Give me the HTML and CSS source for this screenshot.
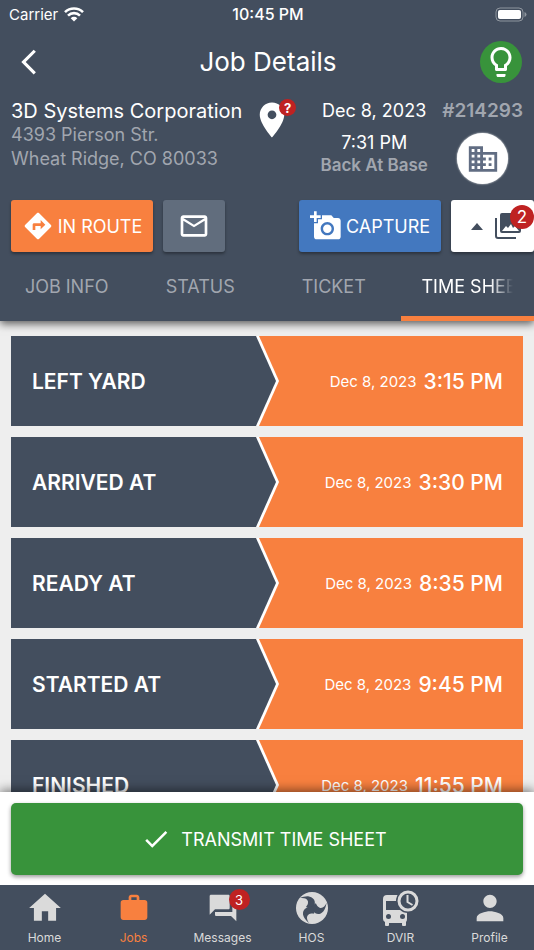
FILE: index.html
```
<!DOCTYPE html>
<html lang="en">
<head>
    <meta charset="UTF-8">
    <meta name="viewport" content="width=device-width, initial-scale=1">
    <title>Job Details</title>
    <link rel="stylesheet" href="styles.css">
</head>
<body>

<header class="header">
    <div class="statusbar">
        <div class="carrier">
            Carrier
            <svg class="wifi" viewBox="0 0 20 15">
                <path d="M1 5.2a12.8 12.8 0 0 1 18 0M4 8.6a8.5 8.5 0 0 1 12 0" fill="none" stroke="currentColor" stroke-width="2.6"/>
                <path d="M10 14.5l-3.3-3.3a4.7 4.7 0 0 1 6.6 0z" fill="currentColor"/>
            </svg>
        </div>
        <div class="clock">10:45 PM</div>
        <svg class="battery" viewBox="0 0 32 15">
            <rect x="1" y="1" width="27" height="13" rx="4" fill="none" stroke="#8e959e"/>
            <rect x="3" y="3" width="23" height="9" rx="2" fill="#fff"/>
            <path d="M29.5 5v5q2-.8 2-2.500t-2-2.500z" fill="#8e959e"/>
        </svg>
    </div>

    <div class="titlebar">
        <button class="backbtn" type="button" aria-label="Back">
            <svg class="icon30" viewBox="0 0 24 24"><path d="M17.51 3.87L15.73 2.1 5.84 12l9.9 9.9 1.77-1.77L9.38 12z"/></svg>
        </button>
        <h1>Job Details</h1>
        <button class="hintbtn" type="button" aria-label="Hints">
            <svg class="icon36" viewBox="0 0 24 24"><path d="M9 21c0 .55.45 1 1 1h4c.55 0 1-.45 1-1v-1H9v1zm3-19C8.140 2 5 5.140 5 9c0 2.380 1.190 4.470 3 5.740V17c0 .55.45 1 1 1h6c.55 0 1-.45 1-1v-2.260c1.810-1.270 3-3.360 3-5.740 0-3.860-3.140-7-7-7zm2.850 11.100l-.85.6V16h-4v-2.300l-.85-.6C7.800 12.160 7 10.630 7 9c0-2.760 2.240-5 5-5s5 2.240 5 5c0 1.630-.8 3.160-2.150 4.100z"/></svg>
        </button>
    </div>

    <div class="jobinfo">
        <div class="customer">
            <h2>3D Systems Corporation</h2>
            <p>4393 Pierson Str.</p>
            <p>Wheat Ridge, CO 80033</p>
        </div>
        <div class="pin">
            <svg class="icon42" viewBox="0 0 24 24"><path d="M12 2C8.130 2 5 5.130 5 9c0 5.250 7 13 7 13s7-7.750 7-13c0-3.870-3.130-7-7-7zm0 9.500c-1.380 0-2.500-1.120-2.500-2.500s1.120-2.500 2.500-2.500 2.500 1.120 2.500 2.500-1.120 2.500-2.500 2.500z"/></svg>
            <span class="badge pinbadge">?</span>
        </div>
        <div class="schedule">
            <div class="date">Dec 8, 2023</div>
            <div class="time">7:31 PM</div>
            <div class="base">Back At Base</div>
        </div>
        <div class="jobref">
            <div class="jobno">#214293</div>
            <button class="companybtn" type="button" aria-label="Company">
                <svg class="icon34" viewBox="0 0 24 24"><path d="M12 7V3H2v18h20V7H12zM6 19H4v-2h2v2zm0-4H4v-2h2v2zm0-4H4V9h2v2zm0-4H4V5h2v2zm4 12H8v-2h2v2zm0-4H8v-2h2v2zm0-4H8V9h2v2zm0-4H8V5h2v2zm10 12h-8v-2h2v-2h-2v-2h2v-2h-2V9h8v10zm-2-8h-2v2h2v-2zm0 4h-2v2h2v-2z"/></svg>
            </button>
        </div>
    </div>

    <div class="actions">
        <button class="btn route" type="button">
            <svg class="icon32" viewBox="0 0 24 24"><path d="M21.710 11.290l-9-9c-.39-.39-1.020-.39-1.410 0l-9 9c-.39.39-.39 1.020 0 1.410l9 9c.39.39 1.020.39 1.410 0l9-9c.39-.38.39-1.010 0-1.410zM14 14.500V12h-4v3H8v-4c0-.55.45-1 1-1h5V7.500l3.500 3.500-3.500 3.500z"/></svg>
            IN ROUTE
        </button>
        <button class="btn mail" type="button" aria-label="Mail">
            <svg class="icon32" viewBox="0 0 24 24"><path d="M20 4H4c-1.100 0-2 .9-2 2v12c0 1.100.9 2 2 2h16c1.100 0 2-.9 2-2V6c0-1.100-.9-2-2-2zm0 14H4V8l8 5 8-5v10zm-8-7L4 6h16l-8 5z"/></svg>
        </button>
        <button class="btn capture" type="button">
            <svg class="icon32" viewBox="0 0 24 24"><path d="M3 4V1h2v3h3v2H5v3H3V6H0V4h3zm3 6V7h3V4h7l1.830 2H21c1.100 0 2 .9 2 2v12c0 1.100-.9 2-2 2H5c-1.100 0-2-.9-2-2V10h3zm7 9c2.760 0 5-2.240 5-5s-2.240-5-5-5-5 2.240-5 5 2.240 5 5 5zm-3.200-5c0 1.770 1.430 3.200 3.200 3.200s3.200-1.430 3.200-3.200-1.430-3.200-3.200-3.200-3.200 1.430-3.200 3.200z"/></svg>
            CAPTURE
        </button>
        <button class="btn gallery" type="button" aria-label="Photos">
            <svg class="caret" viewBox="0 0 12 7"><path d="M0 7l6-7 6 7z"/></svg>
            <svg class="icon28" viewBox="0 0 28 28">
                <path fill-rule="evenodd" d="M8 1h17q2 0 2 2v16q0 2-2 2H8q-2 0-2-2V3q0-2 2-2zm0 18h17l-4-5-2 2-2-4-3 4-2-2z"/>
                <path d="M2 6v18q0 2 2 2h18" fill="none" stroke="currentColor" stroke-width="2"/>
            </svg>
            <span class="badge gallerybadge">2</span>
        </button>
    </div>

    <div class="tabs" role="tablist">
        <button class="tab" type="button" role="tab"><span>JOB INFO</span></button>
        <button class="tab" type="button" role="tab"><span>STATUS</span></button>
        <button class="tab" type="button" role="tab"><span>TICKET</span></button>
        <button class="tab active" type="button" role="tab" aria-selected="true"><span>TIME SHEET</span></button>
    </div>
</header>

<main class="sheet">
    <ul class="stages">
        <li class="stage">
            <div class="arrow"><div class="stagename">LEFT YARD</div></div>
            <div class="stamp"><span>Dec 8, 2023</span> <b>3:15 PM</b></div>
        </li>
        <li class="stage">
            <div class="arrow"><div class="stagename">ARRIVED AT</div></div>
            <div class="stamp"><span>Dec 8, 2023</span> <b>3:30 PM</b></div>
        </li>
        <li class="stage">
            <div class="arrow"><div class="stagename">READY AT</div></div>
            <div class="stamp"><span>Dec 8, 2023</span> <b>8:35 PM</b></div>
        </li>
        <li class="stage">
            <div class="arrow"><div class="stagename">STARTED AT</div></div>
            <div class="stamp"><span>Dec 8, 2023</span> <b>9:45 PM</b></div>
        </li>
        <li class="stage">
            <div class="arrow"><div class="stagename">FINISHED</div></div>
            <div class="stamp"><span>Dec 8, 2023</span> <b>11:55 PM</b></div>
        </li>
    </ul>
</main>

<div class="submitbar">
    <button class="transmit" type="button">
        <svg class="icon30" viewBox="0 0 24 24"><path d="M9 16.170L4.830 12l-1.420 1.410L9 19 21 7l-1.410-1.410z"/></svg>
        TRANSMIT TIME SHEET
    </button>
</div>

<nav class="nav">
    <a href="#home">
        <span class="navicon"><svg class="icon38" viewBox="0 0 24 24"><path d="M10 20v-6h4v6h5v-8h3L12 3 2 12h3v8z"/></svg></span>
        Home
    </a>
    <a href="#jobs" class="current">
        <span class="navicon"><svg class="icon32" viewBox="0 0 24 24"><path d="M20 6h-4V4c0-1.110-.89-2-2-2h-4c-1.110 0-2 .89-2 2v2H4c-1.110 0-2 .89-2 2v11c0 1.110.89 2 2 2h16c1.110 0 2-.89 2-2V8c0-1.110-.89-2-2-2zm-6 0h-4V4h4v2z"/></svg></span>
        Jobs
    </a>
    <a href="#messages">
        <span class="navicon">
            <svg class="icon32" viewBox="0 0 24 24"><path d="M21 6h-2v9H6v2c0 .55.45 1 1 1h11l4 4V7c0-.55-.45-1-1-1zm-4 6V3c0-.55-.45-1-1-1H3c-.55 0-1 .45-1 1v14l4-4h10c.55 0 1-.45 1-1z"/></svg>
            <span class="badge navbadge">3</span>
        </span>
        Messages
    </a>
    <a href="#hos">
        <span class="navicon">
            <svg class="icon32" viewBox="-16 -16 32 32">
                <circle r="16"/>
                <g fill="#434e5e">
                    <path id="blade" d="M1 1C4-4 4-10-3-11.500C-6-12-9-11-12-10C-8-10.500-4.500-9.500-4-6.500C-3.700-4-5-2.500-6-1C-4 0-2 1 1 1z"/>
                    <use href="#blade" transform="rotate(120)"/>
                    <use href="#blade" transform="rotate(240)"/>
                </g>
            </svg>
        </span>
        HOS
    </a>
    <a href="#dvir">
        <span class="navicon">
            <svg class="icon36" viewBox="0 0 36 36">
                <path d="M4 5h17q3 0 3 3v21q0 2-1 3v3q0 1-1 1h-2q-1 0-1-1v-2H6v2q0 1-1 1H3q-1 0-1-1v-3q-2-1-2-3V9q0-4 4-4z"/>
                <g fill="#434e5e">
                    <path d="M3 11h18v9H3z"/>
                    <circle cx="5.500" cy="26.500" r="2.500"/>
                    <circle cx="19.500" cy="26.500" r="2.500"/>
                    <circle cx="25" cy="11" r="12"/>
                </g>
                <circle cx="25" cy="11" r="9" fill="none" stroke="currentColor" stroke-width="3"/>
                <path d="M24.500 5v7l5 3" fill="none" stroke="currentColor" stroke-width="2"/>
            </svg>
        </span>
        DVIR
    </a>
    <a href="#profile">
        <span class="navicon"><svg class="icon40" viewBox="0 0 24 24"><path d="M12 12c2.210 0 4-1.790 4-4s-1.790-4-4-4-4 1.790-4 4 1.790 4 4 4zm0 2c-2.670 0-8 1.340-8 4v2h16v-2c0-2.660-5.330-4-8-4z"/></svg></span>
        Profile
    </a>
</nav>

</body>
</html>
```
FILE: styles.css
```
*{
    box-sizing: border-box;
}

body{
    margin: 0;
    height: 100vh;
    display: flex;
    flex-direction: column;
    overflow: hidden;
    background: #eeeeee;
    color: #ffffff;
    font-family: Inter, "Liberation Sans", sans-serif;
}

h1, h2, p, ul{
    margin: 0;
    padding: 0;
    font-weight: 400;
}

button{
    margin: 0;
    padding: 0;
    border: 0;
    background: none;
    color: inherit;
    font: inherit;
    cursor: pointer;
}

svg{
    display: block;
    flex: none;
    fill: currentColor;
}

.icon28{ width: 28px; height: 28px; }
.icon30{ width: 30px; height: 30px; }
.icon32{ width: 32px; height: 32px; }
.icon34{ width: 34px; height: 34px; }
.icon36{ width: 36px; height: 36px; }
.icon38{ width: 38px; height: 38px; }
.icon40{ width: 40px; height: 40px; }
.icon42{ width: 42px; height: 42px; }

.badge{
    position: absolute;
    display: flex;
    align-items: center;
    justify-content: center;
    border-radius: 50%;
    background: #bf2222;
    color: #ffffff;
}

/* header */
.header{
    position: relative;
    z-index: 1;
    flex: none;
    background: #434e5e;
    box-shadow: 0 3px 8px rgba(0,0,0,0.6);
}

.statusbar{
    display: grid;
    grid-template-columns: 1fr auto 1fr;
    align-items: center;
    height: 28px;
    padding: 0 7px 0 9px;
    font-size: 15px;
}

.carrier{
    display: flex;
    align-items: center;
    gap: 6px;
}

.wifi{
    width: 20px;
    height: 15px;
}

.clock{
    font-size: 16px;
    font-weight: 500;
}

.battery{
    justify-self: end;
    width: 32px;
    height: 15px;
}

.titlebar{
    display: grid;
    grid-template-columns: 42px 1fr 42px;
    align-items: center;
    height: 68px;
    padding: 0 12px 0 14px;
}

h1{
    text-align: center;
    font-size: 26px;
    line-height: 30px;
}

.hintbtn{
    display: flex;
    align-items: center;
    justify-content: center;
    width: 42px;
    height: 42px;
    border-radius: 50%;
    background: #38933b;
}

.jobinfo{
    display: grid;
    grid-template-columns: 1fr 55px 128px auto;
    column-gap: 4px;
    height: 104px;
    padding: 3px 11px 0;
    line-height: 24px;
}

.customer{
    min-width: 0;
    color: #a1a6af;
    font-size: 18px;
    white-space: nowrap;
}

h2{
    color: #ffffff;
    font-size: 20px;
}

.pin{
    position: relative;
}

.pinbadge{
    top: 0;
    left: 28px;
    width: 17px;
    height: 17px;
    font-size: 13px;
    font-weight: 700;
}

.schedule{
    display: flex;
    flex-direction: column;
    align-items: center;
    font-size: 18px;
}

.time{
    margin-top: 9px;
    line-height: 22px;
}

.base{
    color: #a1a6af;
    font-size: 17px;
    font-weight: 600;
    line-height: 22px;
}

.jobref{
    display: flex;
    flex-direction: column;
    align-items: center;
    gap: 10px;
}

.jobno{
    color: #a1a6af;
    font-size: 19px;
    font-weight: 600;
}

.companybtn{
    display: flex;
    align-items: center;
    justify-content: center;
    width: 51px;
    height: 51px;
    border-radius: 50%;
    background: #ffffff;
    color: #616d83;
    box-shadow: 0 0 2px #ffffff;
}

.actions{
    display: flex;
    gap: 10px;
    padding-left: 11px;
}

.btn{
    display: flex;
    align-items: center;
    justify-content: center;
    gap: 4px;
    height: 52px;
    border-radius: 3px;
    font-size: 18px;
    white-space: nowrap;
    box-shadow: 0 2px 3px rgba(0,0,0,0.35);
}

.route{
    width: 142px;
    background: #f8803f;
}

.mail{
    width: 62px;
    margin-right: auto;
    background: #616d7d;
}

.capture{
    width: 142px;
    background: #4378bf;
}

.gallery{
    position: relative;
    width: 83px;
    gap: 11px;
    padding-left: 7px;
    background: #ffffff;
    color: #434e5e;
}

.caret{
    width: 12px;
    height: 7px;
}

.gallerybadge{
    top: 5px;
    right: 0;
    width: 24px;
    height: 24px;
    font-size: 17px;
}

.tabs{
    display: grid;
    grid-template-columns: repeat(4, 1fr);
}

.tab{
    height: 69px;
    padding: 0 21px;
    border-bottom: 5px solid transparent;
    border-top: 4px solid transparent;
    color: #a1a6af;
    font-size: 18px;
    white-space: nowrap;
    min-width: 0;
}

.tab span{
    display: block;
    overflow: hidden;
}

.tab.active{
    color: #ffffff;
    border-bottom-color: #f8803f;
}

.tab.active span{
    -webkit-mask-image: linear-gradient(to right, #000 75%, transparent);
    mask-image: linear-gradient(to right, #000 75%, transparent);
}

/* time sheet */
.sheet{
    flex: 1;
    min-height: 0;
    overflow: hidden;
    padding: 15px 11px 0;
}

.stages{
    display: flex;
    flex-direction: column;
    gap: 11px;
    list-style: none;
}

.stage{
    display: flex;
    height: 90px;
    background: #f8803f;
}

.arrow{
    width: calc(50% + 12px);
    padding-right: 3px;
    background: #ffffff;
    clip-path: polygon(0 0, calc(100% - 20px) 0, 100% 50%, calc(100% - 20px) 100%, 0 100%);
}

.stagename{
    display: flex;
    align-items: center;
    height: 100%;
    padding-left: 21px;
    background: #434e5e;
    font-size: 21px;
    font-weight: 600;
    clip-path: polygon(0 0, calc(100% - 20px) 0, 100% 50%, calc(100% - 20px) 100%, 0 100%);
}

.stamp{
    flex: 1;
    display: flex;
    align-items: center;
    justify-content: flex-end;
    gap: 7px;
    padding-right: 20px;
    font-size: 15px;
    white-space: nowrap;
}

.stamp b{
    font-size: 21px;
    font-weight: 500;
}

/* bottom */
.submitbar{
    position: relative;
    z-index: 1;
    flex: none;
    padding: 11px 11px 10px;
    background: #ffffff;
    box-shadow: 0 -2px 10px rgba(0,0,0,0.5);
}

.transmit{
    display: flex;
    align-items: center;
    justify-content: center;
    gap: 10px;
    width: 100%;
    height: 72px;
    padding-right: 6px;
    border-radius: 5px;
    background: #38933b;
    font-size: 18px;
    box-shadow: 0 2px 4px rgba(0,0,0,0.4);
}

.nav{
    position: relative;
    z-index: 1;
    flex: none;
    display: grid;
    grid-template-columns: repeat(6, 1fr);
    height: 65px;
    background: #434e5e;
}

.nav a{
    display: flex;
    flex-direction: column;
    align-items: center;
    color: #dadada;
    font-size: 12px;
    line-height: 16px;
    text-decoration: none;
}

.nav a.current{
    color: #f8803f;
}

.navicon{
    position: relative;
    display: flex;
    align-items: center;
    justify-content: center;
    width: 54px;
    height: 45px;
}

.navbadge{
    top: 4px;
    right: 0;
    width: 21px;
    height: 21px;
    font-size: 13px;
}
```
